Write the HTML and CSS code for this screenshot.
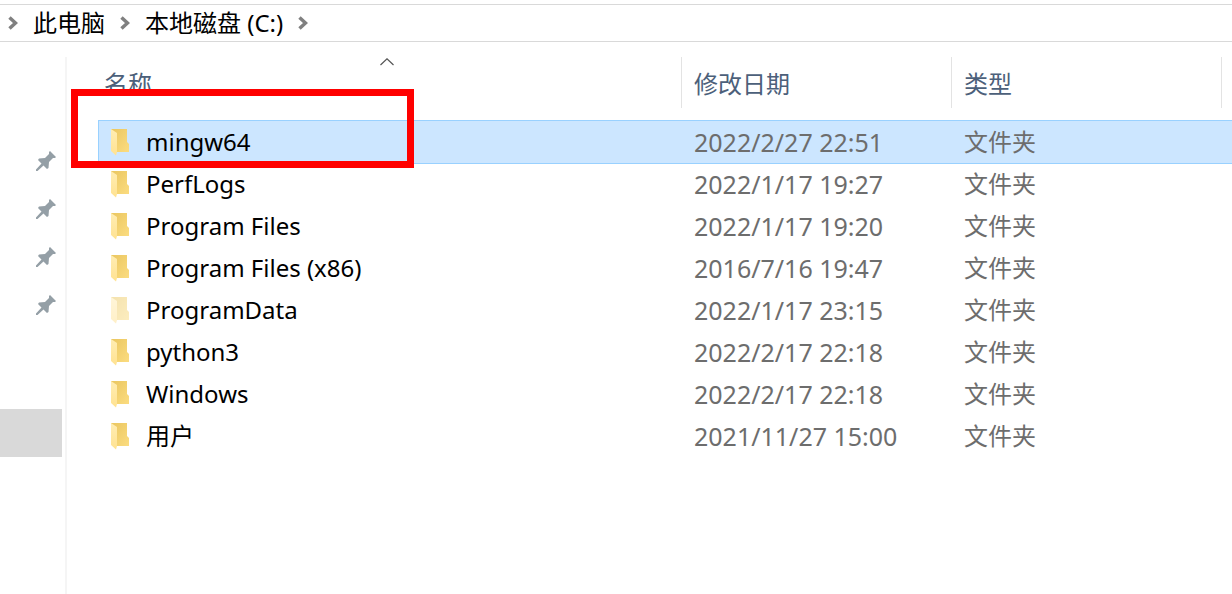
FILE: index.html
```
<!DOCTYPE html>
<html lang="zh-CN">
<head>
<meta charset="utf-8">
<title>本地磁盘 (C:)</title>
<link rel="stylesheet" href="styles.css">
</head>
<body>
<svg class="defs" aria-hidden="true">
  <defs>
    <linearGradient id="back" x1="0" y1="0" x2="1" y2="1"><stop offset="0" stop-color="#eac660"/><stop offset="1" stop-color="#fbdc80"/></linearGradient>
    <linearGradient id="flap" x1="0" y1="0" x2="0" y2="1"><stop offset="0" stop-color="#ffedb3"/><stop offset="1" stop-color="#ffe291"/></linearGradient>
    <symbol id="folder" viewBox="0 0 20 28">
      <path d="M1 1H17V14L19 16V24H6L1 22Z" fill="url(#back)"/>
      <path d="M1 1L7 5V24L6 27.500L1 23Z" fill="url(#flap)"/>
    </symbol>
    <symbol id="pin" viewBox="0 0 20 20">
      <path d="M14 0L20 6L19 7L17 7L13 11L12.500 17L11 18L7.500 14.500L1.500 20L0 20V18.500L5.500 12.500L2 9L3 7.500L9 7L13 3V1Z" fill="#949fa6"/>
    </symbol>
    <symbol id="chevron" viewBox="0 0 10 14"><path d="M1.500 1.500L7.500 7L1.500 12.500" fill="none" stroke="#808080" stroke-width="3.500"/></symbol>
  </defs>
</svg>
<nav class="address" aria-label="地址">
  <svg class="chevron"><use href="#chevron"/></svg>
  <a class="crumb" href="#pc">此电脑</a>
  <svg class="chevron"><use href="#chevron"/></svg>
  <a class="crumb" href="#c">本地磁盘 (C:)</a>
  <svg class="chevron"><use href="#chevron"/></svg>
</nav>
<div class="explorer">
  <aside class="sidebar">
    <svg class="pin"><use href="#pin"/></svg>
    <svg class="pin"><use href="#pin"/></svg>
    <svg class="pin"><use href="#pin"/></svg>
    <svg class="pin"><use href="#pin"/></svg>
    <div class="current"></div>
  </aside>
  <main class="files">
    <table class="list">
      <colgroup><col class="col-name"><col class="col-date"><col class="col-type"><col></colgroup>
      <thead>
        <tr>
          <th><button class="heading" type="button">名称<svg class="sort" viewBox="0 0 14 8"><path d="M.5 7L7 .8L13.500 7" fill="none" stroke="#555" stroke-width="1.200"/></svg></button></th>
          <th><button class="heading" type="button">修改日期</button></th>
          <th><button class="heading" type="button">类型</button></th>
          <td></td>
        </tr>
      </thead>
      <tbody>
        <tr class="selected"><td><span class="name"><svg class="folder"><use href="#folder"/></svg>mingw64</span></td><td class="date">2022/2/27 22:51</td><td>文件夹</td><td></td></tr>
        <tr><td><span class="name"><svg class="folder"><use href="#folder"/></svg>PerfLogs</span></td><td class="date">2022/1/17 19:27</td><td>文件夹</td><td></td></tr>
        <tr><td><span class="name"><svg class="folder"><use href="#folder"/></svg>Program Files</span></td><td class="date">2022/1/17 19:20</td><td>文件夹</td><td></td></tr>
        <tr><td><span class="name"><svg class="folder"><use href="#folder"/></svg>Program Files (x86)</span></td><td class="date">2016/7/16 19:47</td><td>文件夹</td><td></td></tr>
        <tr><td><span class="name"><svg class="folder faded"><use href="#folder"/></svg>ProgramData</span></td><td class="date">2022/1/17 23:15</td><td>文件夹</td><td></td></tr>
        <tr><td><span class="name"><svg class="folder"><use href="#folder"/></svg>python3</span></td><td class="date">2022/2/17 22:18</td><td>文件夹</td><td></td></tr>
        <tr><td><span class="name"><svg class="folder"><use href="#folder"/></svg>Windows</span></td><td class="date">2022/2/17 22:18</td><td>文件夹</td><td></td></tr>
        <tr><td><span class="name"><svg class="folder"><use href="#folder"/></svg>用户</span></td><td class="date">2021/11/27 15:00</td><td>文件夹</td><td></td></tr>
      </tbody>
    </table>
    <div class="marker"></div>
  </main>
</div>
</body>
</html>
```
FILE: styles.css
```
* { box-sizing: border-box; }
body {
  margin: 0;
  min-height: 100vh;
  display: flex;
  flex-direction: column;
  overflow: hidden;
  background: #fff;
  color: #000;
  font-family: "Noto Sans", "Noto Sans CJK SC", sans-serif;
  font-size: 24px;
  line-height: 36px;
}
.defs { position: absolute; width: 0; height: 0; }
.address {
  display: flex;
  align-items: center;
  gap: 15px;
  height: 38px;
  margin-top: 4px;
  padding-left: 8px;
  border-top: 1px solid #d9d9d9;
  border-bottom: 1px solid #d9d9d9;
}
.crumb { color: inherit; text-decoration: none; }
.chevron { width: 10px; height: 14px; }
.explorer { flex: 1; display: flex; padding-top: 15px; }
.sidebar {
  flex: none;
  width: 67px;
  padding-top: 94px;
  border-right: 2px solid #f5f5f5;
}
.pin {
  display: block;
  width: 20px;
  height: 20px;
  margin: 0 0 28px 36px;
}
.current { width: 62px; height: 48px; margin-top: 94px; background: #d9d9d9; }
.files { position: relative; flex: 1; min-width: 0; padding-left: 32px; }
.list { width: 100%; table-layout: fixed; border-collapse: collapse; }
.col-name { width: 583px; }
.col-date, .col-type { width: 270px; }
.list th, .list td { padding: 0; text-align: left; font-weight: 400; white-space: nowrap; }
.list th { height: 64px; vertical-align: top; }
.heading {
  position: relative;
  display: block;
  width: 100%;
  height: 51px;
  padding: 3px 0 0 12px;
  border: 0;
  border-right: 1px solid #e3e3e3;
  background: none;
  color: #4c607a;
  font: inherit;
  text-align: left;
}
th:first-child .heading { padding-left: 5px; }
.sort { position: absolute; left: 281px; top: 1px; width: 14px; height: 8px; }
.list tbody tr { height: 42px; }
.list tbody td { padding-left: 12px; color: #6d6d6d; }
.list tbody td:first-child { padding-left: 11px; color: #000; }
.list .date { font-size: 25px; }
.selected { background: #cce6ff; outline: 1px solid #99d1ff; }
.name { display: flex; align-items: center; gap: 16px; }
.folder { width: 20px; height: 28px; }
.faded { opacity: .5; }
.marker {
  position: absolute;
  left: 4px;
  top: 32px;
  width: 343px;
  height: 79px;
  border: 7px solid #f00;
  pointer-events: none;
}
```
